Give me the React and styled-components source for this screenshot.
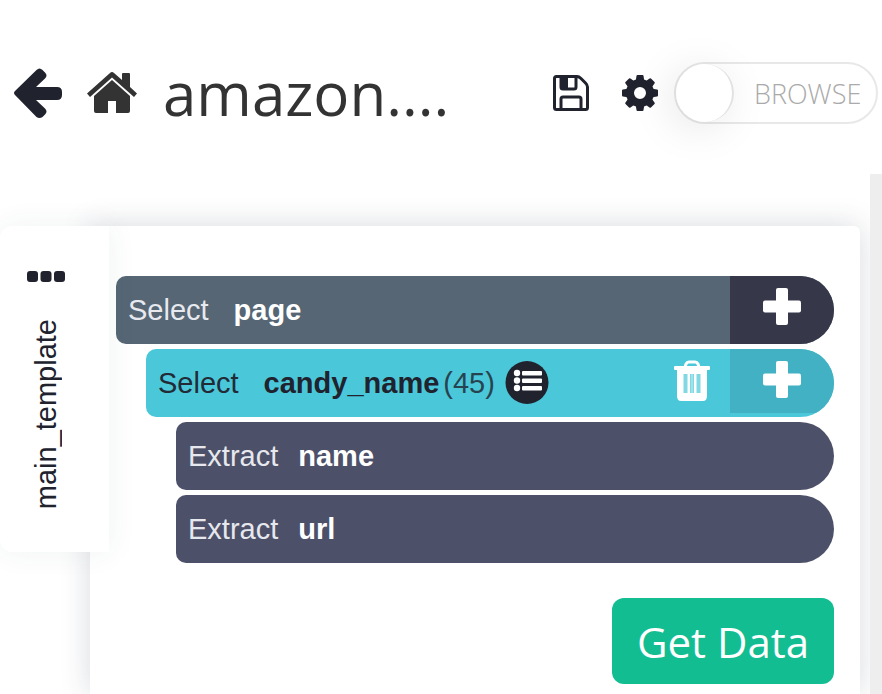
import React from "react";
import styled, { createGlobalStyle } from "styled-components";

const sans = '"Open Sans", "Noto Sans", sans-serif';
const ink = "#20222e";

const GlobalStyle = createGlobalStyle`
  *, *::before, *::after { box-sizing: border-box; }
  html, body, #root { height: 100%; }
  body {
    margin: 0;
    background: #fff;
    color: ${ink};
    font-family: "Liberation Sans", Arial, sans-serif;
    overflow: hidden;
  }
  button { font: inherit; color: inherit; border: 0; background: none; padding: 0; cursor: pointer; }
`;

const Page = styled.div`
  display: flex;
  flex-direction: column;
  min-height: 100%;
`;

const Header = styled.header`
  display: flex;
  align-items: center;
  height: 174px;
  padding: 12px 4px 0 14px;
`;

const IconButton = styled.button`
  display: flex;
  flex: none;
  margin-right: ${(p) => p.$gap || 0}px;
  color: ${(p) => p.$color || ink};
`;

const Title = styled.h1`
  flex: 1;
  margin: 0;
  font-family: ${sans};
  font-size: 60px;
  line-height: 80px;
  font-weight: 400;
  color: #333;
  white-space: nowrap;
`;

const Toggle = styled.label`
  display: flex;
  align-items: center;
  flex: none;
  width: 204px;
  height: 62px;
  border: 2px solid #e8e8e8;
  border-radius: 31px;
  color: #aaa;
  font-family: ${sans};
  font-size: 27px;
  font-weight: 300;
  cursor: pointer;
`;

const ToggleInput = styled.input`
  appearance: none;
  flex: none;
  width: 58px;
  height: 58px;
  margin: 0 20px 0 0;
  border-radius: 50%;
  background: #fff;
  border-right: 2px solid #e2e2e2;
  box-shadow: -6px 6px 44px rgba(0, 0, 0, 0.1);
`;

const Workspace = styled.div`
  display: flex;
  flex: 1;
  align-items: stretch;
`;

const Canvas = styled.main`
  display: flex;
  flex: 1;
  align-items: flex-start;
  padding: 52px 10px 0 0;
`;

const ScrollTrack = styled.div`
  flex: none;
  width: 12px;
  background: #eee;
`;

const TemplateTab = styled.button`
  position: relative;
  z-index: 1;
  display: flex;
  flex-direction: column;
  align-items: center;
  flex: none;
  gap: 37px;
  width: 109px;
  height: 326px;
  margin-right: -19px;
  padding: 45px 17px 0 0;
  border-radius: 12px 0 0 12px;
  background: #fff;
  box-shadow: 0 0 30px rgba(40, 70, 80, 0.07);
`;

const TabName = styled.span`
  writing-mode: vertical-rl;
  transform: rotate(180deg);
  font-size: 29px;
  line-height: 34px;
`;

const Panel = styled.section`
  flex: 1;
  align-self: stretch;
  padding: 50px 26px 0;
  border-radius: 0 6px 0 0;
  background: #fff;
  box-shadow: 0 0 30px rgba(40, 50, 70, 0.18);
`;

const Commands = styled.ul`
  display: flex;
  flex-direction: column;
  gap: 5px;
  margin: 0 0 35px;
  padding: 0;
  list-style: none;
`;

const Command = styled.li`
  display: flex;
  align-items: flex-start;
  height: 68px;
  margin-left: ${(p) => p.$level * 30}px;
  padding-left: 12px;
  overflow: hidden;
  border-radius: 10px 34px 34px 10px;
  background: ${(p) => p.$bg};
  color: ${(p) => p.$color || "#f0f1f5"};
  font-size: 29px;
  line-height: 69px;
  white-space: nowrap;
`;

const Verb = styled.span`
  margin-right: ${(p) => p.$gap}px;
  opacity: 0.95;
`;

const Name = styled.strong`
  flex: ${(p) => (p.$grow ? 1 : "none")};
  color: ${(p) => p.$color || "#fff"};
`;

const Count = styled.span`
  margin: 0 10px 0 4px;
  opacity: 0.8;
`;

const ListButton = styled(IconButton)`
  margin: 12px auto 0 0;
`;

const TrashButton = styled(IconButton)`
  margin: 11px 20px 0 0;
`;

const AddButton = styled.button`
  display: flex;
  justify-content: center;
  flex: none;
  width: 104px;
  height: ${(p) => p.$height}px;
  padding-top: 12px;
  background: ${(p) => p.$bg};
  color: #fff;
`;

const Actions = styled.div`
  display: flex;
  justify-content: flex-end;
`;

const GetData = styled.button`
  && {
    width: 222px;
    height: 86px;
    border-radius: 12px;
    background: #13bd92;
    color: #fff;
    font-family: ${sans};
    font-size: 42px;
    font-weight: 400;
  }
`;

const ArrowIcon = () => (
  <svg width="48" height="50" viewBox="0 0 48 50" fill="currentColor" aria-hidden="true">
    <path d="M1 23 22.500 2q3-3 6 0l2.500 2.500q3 3 0 6L22 19h21q5 0 5 5v3q0 5-5 5H22l9 8.500q3 3 0 6L28.500 49q-3 2-6 0L1 27q-2-2 0-4z" />
  </svg>
);

const HomeIcon = () => (
  <svg width="50" height="42" viewBox="0 0 50 42" fill="currentColor" aria-hidden="true">
    <path d="M23 1q2-2 4 0l8 7V2q0-1 1-1h6q1 0 1 1v13l7 6.500-3 3.500L25 5.500 3 25l-3-3.500z" />
    <path d="m25 8 18 16v15a2 2 0 0 1-2 2H29V29h-8v12H9a2 2 0 0 1-2-2V24z" />
  </svg>
);

const SaveIcon = () => (
  <svg width="36" height="36" viewBox="0 0 36 36" fill="none" stroke="currentColor" strokeWidth="3" strokeLinejoin="round" aria-hidden="true">
    <path d="M3.500 1.500H24q2 0 4 2l4.500 4.500q2 2 2 4v20.500q0 2-2 2h-29q-2 0-2-2v-29q0-2 2-2z" />
    <path d="M8 2v10q0 2 2 2h11q2 0 2-2V2M8 34V24q0-2 2-2h16q2 0 2 2v10" />
    <path d="M9 3h6v10H9z" fill="currentColor" stroke="none" />
  </svg>
);

const teeth = [0, 45, 90, 135, 180, 225, 270, 315];
const GearIcon = () => (
  <svg width="36" height="36" viewBox="0 0 36 36" fill="currentColor" aria-hidden="true">
    <circle cx="18" cy="18" r="10" fill="none" stroke="currentColor" strokeWidth="8" />
    {teeth.map((angle) => (
      <path key={angle} d="M15.500 0h5q1 0 1 1l1 6h-9l1-6q0-1 1-1z" transform={`rotate(${angle} 18 18)`} />
    ))}
  </svg>
);

const DotsIcon = () => (
  <svg width="38" height="11" viewBox="0 0 38 11" fill={ink} aria-hidden="true">
    <rect width="11" height="11" rx="3" />
    <rect x="13.500" width="11" height="11" rx="3" />
    <rect x="27" width="11" height="11" rx="3" />
  </svg>
);

const PlusIcon = () => (
  <svg width="38" height="37" viewBox="0 0 38 37" fill="currentColor" aria-hidden="true">
    <rect x="13" width="12" height="37" rx="2" />
    <rect y="12.500" width="38" height="12" rx="2" />
  </svg>
);

const ListIcon = () => (
  <svg width="44" height="43" viewBox="0 0 44 43" aria-hidden="true">
    <circle cx="22" cy="21.500" r="21.500" fill={ink} />
    <g fill="#fff">
      {[11, 18.500, 26].map((y) => (
        <React.Fragment key={y}>
          <circle cx="12" cy={y + 1} r="3.200" />
          <rect x="17" y={y - 1} width="20" height="4.500" rx="1" />
        </React.Fragment>
      ))}
    </g>
  </svg>
);

const TrashIcon = () => (
  <svg width="36" height="41" viewBox="0 0 36 41" fill="none" aria-hidden="true">
    <path d="M11 7l1-3q1-2 3-2h6q2 0 3 2l1 3" stroke="#fff" strokeWidth="3" />
    <rect y="6" width="36" height="4" rx="1" fill="#fff" />
    <path d="M3 9h30v27q0 5-4 5H7q-4 0-4-5z" fill="#fff" />
    <path d="M11.500 14v19M18 14v19M24.500 14v19" stroke="#80d8e3" strokeWidth="4" />
    <path d="M18 14v19" stroke="#fff" strokeWidth="1" opacity=".5" />
  </svg>
);

export default function App() {
  return (
    <>
      <GlobalStyle />
      <Page>
        <Header>
          <IconButton aria-label="Back" $gap={25}><ArrowIcon /></IconButton>
          <IconButton aria-label="Home" $gap={26} $color="#333"><HomeIcon /></IconButton>
          <Title>amazon....</Title>
          <IconButton aria-label="Save" $gap={33}><SaveIcon /></IconButton>
          <IconButton aria-label="Settings" $gap={16}><GearIcon /></IconButton>
          <Toggle>
            <ToggleInput type="checkbox" role="switch" />
            BROWSE
          </Toggle>
        </Header>
        <Workspace>
          <Canvas>
            <TemplateTab>
              <DotsIcon />
              <TabName>main_template</TabName>
            </TemplateTab>
            <Panel>
              <Commands>
                <Command $level={0} $bg="#566675">
                  <Verb $gap={25}>Select</Verb>
                  <Name $grow>page</Name>
                  <AddButton aria-label="Add command to page" $height={68} $bg="#36384a"><PlusIcon /></AddButton>
                </Command>
                <Command $level={1} $bg="#4ac8da" $color={ink}>
                  <Verb $gap={25}>Select</Verb>
                  <Name $color={ink}>candy_name</Name>
                  <Count>(45)</Count>
                  <ListButton aria-label="List options"><ListIcon /></ListButton>
                  <TrashButton aria-label="Delete candy_name"><TrashIcon /></TrashButton>
                  <AddButton aria-label="Add command to candy_name" $height={64} $bg="#41b1c3"><PlusIcon /></AddButton>
                </Command>
                <Command $level={2} $bg="#4d5069">
                  <Verb $gap={20}>Extract</Verb>
                  <Name>name</Name>
                </Command>
                <Command $level={2} $bg="#4d5069">
                  <Verb $gap={20}>Extract</Verb>
                  <Name>url</Name>
                </Command>
              </Commands>
              <Actions>
                <GetData>Get Data</GetData>
              </Actions>
            </Panel>
          </Canvas>
          <ScrollTrack />
        </Workspace>
      </Page>
    </>
  );
}
